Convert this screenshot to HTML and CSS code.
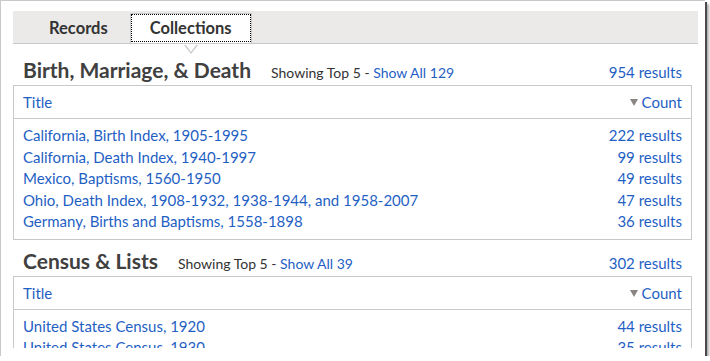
FILE: index.html
```html
<!DOCTYPE html>
<html lang="en">
  <head>
    <meta charset="UTF-8" />
    <title>Collections</title>
    <link rel="stylesheet" href="styles.css">
  </head>
  <body>
    <div class="window">
      <div class="viewport">
        <div class="tabs">
          <a class="tab">Records</a>
          <a class="tab active">Collections</a>
        </div>

        <div class="section first">
          <div class="section-head">
            <h2>Birth, Marriage, &amp; Death</h2>
            <span class="showing">Showing Top 5 - <a href="#">Show All 129</a></span>
            <a class="total" href="#">954 results</a>
          </div>
          <div class="table">
            <div class="table-head">
              <a href="#">Title</a>
              <a href="#" class="sort"><span class="arrow"></span>Count</a>
            </div>
            <div class="table-body">
              <div class="row"><a href="#">California, Birth Index, 1905-1995</a><a href="#">222 results</a></div>
              <div class="row"><a href="#">California, Death Index, 1940-1997</a><a href="#">99 results</a></div>
              <div class="row"><a href="#">Mexico, Baptisms, 1560-1950</a><a href="#">49 results</a></div>
              <div class="row"><a href="#">Ohio, Death Index, 1908-1932, 1938-1944, and 1958-2007</a><a href="#">47 results</a></div>
              <div class="row"><a href="#">Germany, Births and Baptisms, 1558-1898</a><a href="#">36 results</a></div>
            </div>
          </div>
        </div>

        <div class="section">
          <div class="section-head">
            <h2>Census &amp; Lists</h2>
            <span class="showing">Showing Top 5 - <a href="#">Show All 39</a></span>
            <a class="total" href="#">302 results</a>
          </div>
          <div class="table">
            <div class="table-head">
              <a href="#">Title</a>
              <a href="#" class="sort"><span class="arrow"></span>Count</a>
            </div>
            <div class="table-body">
              <div class="row"><a href="#">United States Census, 1920</a><a href="#">44 results</a></div>
              <div class="row"><a href="#">United States Census, 1930</a><a href="#">35 results</a></div>
              <div class="row"><a href="#">United States Census, 1940</a><a href="#">31 results</a></div>
            </div>
          </div>
        </div>
      </div>
    </div>
  </body>
</html>
```

FILE: styles.css
```css
body {
  margin: 0;
  background-color: #ffffff;
  font-family: Lato, "Open Sans", sans-serif;
}
a {
  color: #1f5fc4;
  text-decoration: none;
}
.window {
  width: 704px;
  height: 355px;
  border-left: 1px solid #c9c9c9;
  border-top: 1px solid #c9c9c9;
  box-shadow: 2px 2px 0 #4a4a4a, 4px 4px 2px #b0b0b0;
  background-color: #ffffff;
}
.viewport {
  height: 347px;
  overflow: hidden;
  padding-left: 12px;
}
.tabs {
  display: flex;
  margin-top: 10px;
  width: 685px;
  height: 32px;
  background-color: #ebeae8;
  border-bottom: 1px solid #c9c9c9;
}
.tab {
  position: relative;
  margin-top: 2px;
  height: 30px;
  padding: 0 21px;
  border: 1px solid transparent;
  border-bottom: none;
  box-sizing: border-box;
  color: #333;
  font-size: 16.5px;
  font-weight: bold;
  line-height: 28px;
}
.tab:first-child {
  margin-left: 14px;
}
.tab.active {
  padding: 0 19px;
  background-color: #ffffff;
  border-color: #c9c9c9;
  outline: 1px dotted #000;
  outline-offset: -2px;
}
.tab.active::before,
.tab.active::after {
  content: "";
  position: absolute;
  left: 50%;
  border-style: solid;
  border-color: transparent;
}
.tab.active::before {
  top: 31px;
  margin-left: -7px;
  border-width: 9px 7px 0 7px;
  border-top-color: #c9c9c9;
}
.tab.active::after {
  top: 30px;
  margin-left: -6px;
  border-width: 8px 6px 0 6px;
  border-top-color: #ffffff;
}
.section {
  width: 679px;
  margin-top: 6px;
}
.section.first {
  margin-top: 11px;
}
.section-head {
  display: flex;
  align-items: baseline;
  padding: 0 10px;
  height: 30px;
  line-height: 30px;
}
.section-head h2 {
  margin: 0;
  color: #404040;
  font-size: 21px;
  font-weight: bold;
}
.showing {
  margin-left: 20px;
  color: #333;
  font-size: 14px;
}
.total {
  margin-left: auto;
  font-size: 15px;
}
.table {
  border: 1px solid #c9c9c9;
  font-size: 15px;
}
.table-head {
  display: flex;
  justify-content: space-between;
  padding: 0 9px;
  height: 32px;
  line-height: 32px;
  border-bottom: 1px solid #c9c9c9;
}
.arrow {
  display: inline-block;
  margin-right: 4px;
  vertical-align: 2px;
  border-style: solid;
  border-color: #8a8582 transparent transparent transparent;
  border-width: 7px 4px 0 4px;
}
.table-body {
  padding: 6px 9px 6px;
}
.row {
  display: flex;
  justify-content: space-between;
  line-height: 21.5px;
}
```
